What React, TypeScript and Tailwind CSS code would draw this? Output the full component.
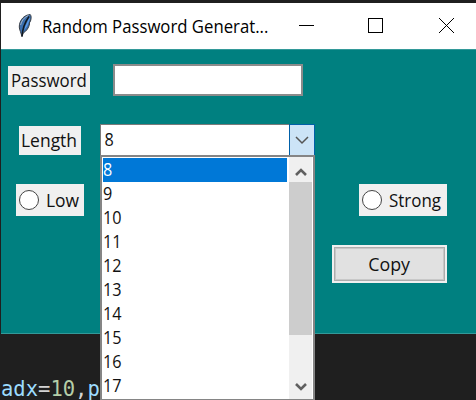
import React from "react";

const lengths = ["8", "9", "10", "11", "12", "13", "14", "15", "16", "17"];

function Radio({ label, className, textClass }: { label: string; className: string; textClass: string }) {
  return (
    <label className={`flex h-8 shrink-0 items-center bg-[#f0f0f0] pl-[3px] ${className}`}>
      <span className="h-5 w-5 shrink-0 rounded-full border-[1.5px] border-[#444] bg-white" />
      <span className={`ml-[7px] origin-left whitespace-nowrap ${textClass}`}>{label}</span>
    </label>
  );
}

function Feather() {
  return (
    <svg width="16" height="26" viewBox="0 0 16 26" className="shrink-0">
      <path d="M13.2 1.5 C8.5 2 5 4.5 3 9.5 C2 12.5 2 15.5 3.4 18.5 L5 23.5 L6.2 20 C9.5 18 11.8 15 12.5 11 L12.3 10 L13.5 8 C14.4 5 14.4 3 13.2 1.5Z" fill="#3b6fae" stroke="#3a3f46" strokeWidth="1" />
      <path d="M12.7 4 C11 8 8.5 12 7 17 C10 14.5 11.2 11 12.7 6Z" fill="#5c9cec" />
      <path d="M12 3.5 C8 9 5.6 14 5 23.5" fill="none" stroke="#101820" strokeWidth="1.5" />
      <path d="M11.5 2.3 C7 4.5 4.5 8 3.6 12" fill="none" stroke="#a4b2c4" strokeWidth="1" />
    </svg>
  );
}

export default function App() {
  return (
    <div className="relative h-[400px] w-[476px] overflow-hidden bg-[#1f1f1f] pl-px pt-[3px] font-['Open_Sans','Noto_Sans',sans-serif] text-[18px] leading-6 text-[#111]">
      <header className="flex h-[46px] items-center bg-white pl-4 text-black">
        <Feather />
        <h1 className="ml-[9px] w-[251px] origin-left scale-x-[0.93] whitespace-nowrap text-[18px]">Random Password Generat...</h1>
        <svg width="170" height="46" viewBox="293 3 170 46" fill="none" stroke="black" className="shrink-0" shapeRendering="crispEdges">
          <path d="M299 25.5H314M368.5 18.5H382.5V32.5H368.5Z" />
          <path d="M439 18L454 33M454 18L439 33" shapeRendering="auto" />
        </svg>
      </header>
      <main className="flex h-[285px] flex-col border-y border-[#339999] bg-[#008080]">
        <div className="ml-[7px] mt-[14px] flex h-8 items-center">
          <div className="flex h-[29px] w-[82px] items-center bg-[#f0f0f0] pl-[3px]">
            <span className="origin-left scale-x-[0.935]">Password</span>
          </div>
          <div className="ml-[23px] h-8 w-[190px] border-2 border-[#8b8b8b] bg-white" />
        </div>
        <div className="ml-[18px] mt-7 flex h-8 items-center">
          <div className="flex h-[29px] w-[62px] items-center bg-[#f0f0f0] pl-[2px]">
            <span className="origin-left scale-x-[0.97]">Length</span>
          </div>
          <div className="ml-[19px] flex h-8 w-[215px] border border-[#7a7a7a] bg-white">
            <span className="flex-1 origin-left scale-x-[0.9] pl-1 pt-[2px]">8</span>
            <span className="-my-px -mr-px flex w-[26px] items-center justify-center border border-[#0060a8] bg-[#cce4f7]">
              <svg width="14" height="10" viewBox="0 0 14 10" fill="none" stroke="#555" strokeWidth="1.5"><path d="M1 2L7 8L13 2" /></svg>
            </span>
          </div>
        </div>
        <div className="mt-7 flex pl-[15px] pr-[29px]">
          <Radio label="Low" className="w-[68px]" textClass="scale-x-[0.97]" />
          <Radio label="Strong" className="ml-auto w-[88px]" textClass="scale-x-[0.94]" />
        </div>
        <button className="ml-auto mr-[29px] mt-[29px] flex h-[38px] w-[115px] border border-[#f0f0f0] bg-[#f0f0f0] p-px">
          <span className="flex h-full w-full items-center justify-center border border-[#adadad] bg-[#e1e1e1] outline outline-1 -outline-offset-2 outline-[#c8c8c8]">
            <span className="scale-x-[0.99]">Copy</span>
          </span>
        </button>
      </main>
      <pre className="mt-[41px] font-['DejaVu_Sans_Mono',monospace] text-[20.5px] leading-7 text-[#9cdcfe]">adx<span className="text-[#d4d4d4]">=</span><span className="text-[#b5cea8]">10</span><span className="text-[#d4d4d4]">,</span>p</pre>
      <div className="absolute left-[100px] top-[155px] flex h-[245px] w-[215px] border-2 border-b border-[#858585] bg-white">
        <ul className="w-[185px] pl-px pt-px">
          {lengths.map((n, i) => (
            <li key={n} className={`h-6 leading-[22px] ${i === 0 ? "bg-[#0078d7] text-white" : ""}`}>
              <span className="inline-block origin-left scale-x-[0.9]">{n}</span>
            </li>
          ))}
        </ul>
        <div className="ml-[2px] flex w-[23px] flex-col bg-[#f0f0f0]">
          <div className="flex h-[25px] items-center justify-center pt-1">
            <svg width="12" height="10" viewBox="0 0 12 10" fill="none" stroke="#606060" strokeWidth="2.6"><path d="M1 8L6 3L11 8" /></svg>
          </div>
          <div className="h-[153px] bg-[#cdcdcd]" />
          <div className="mt-auto flex h-[25px] items-center justify-center">
            <svg width="12" height="10" viewBox="0 0 12 10" fill="none" stroke="#606060" strokeWidth="2.6"><path d="M1 2L6 7L11 2" /></svg>
          </div>
        </div>
      </div>
    </div>
  );
}
